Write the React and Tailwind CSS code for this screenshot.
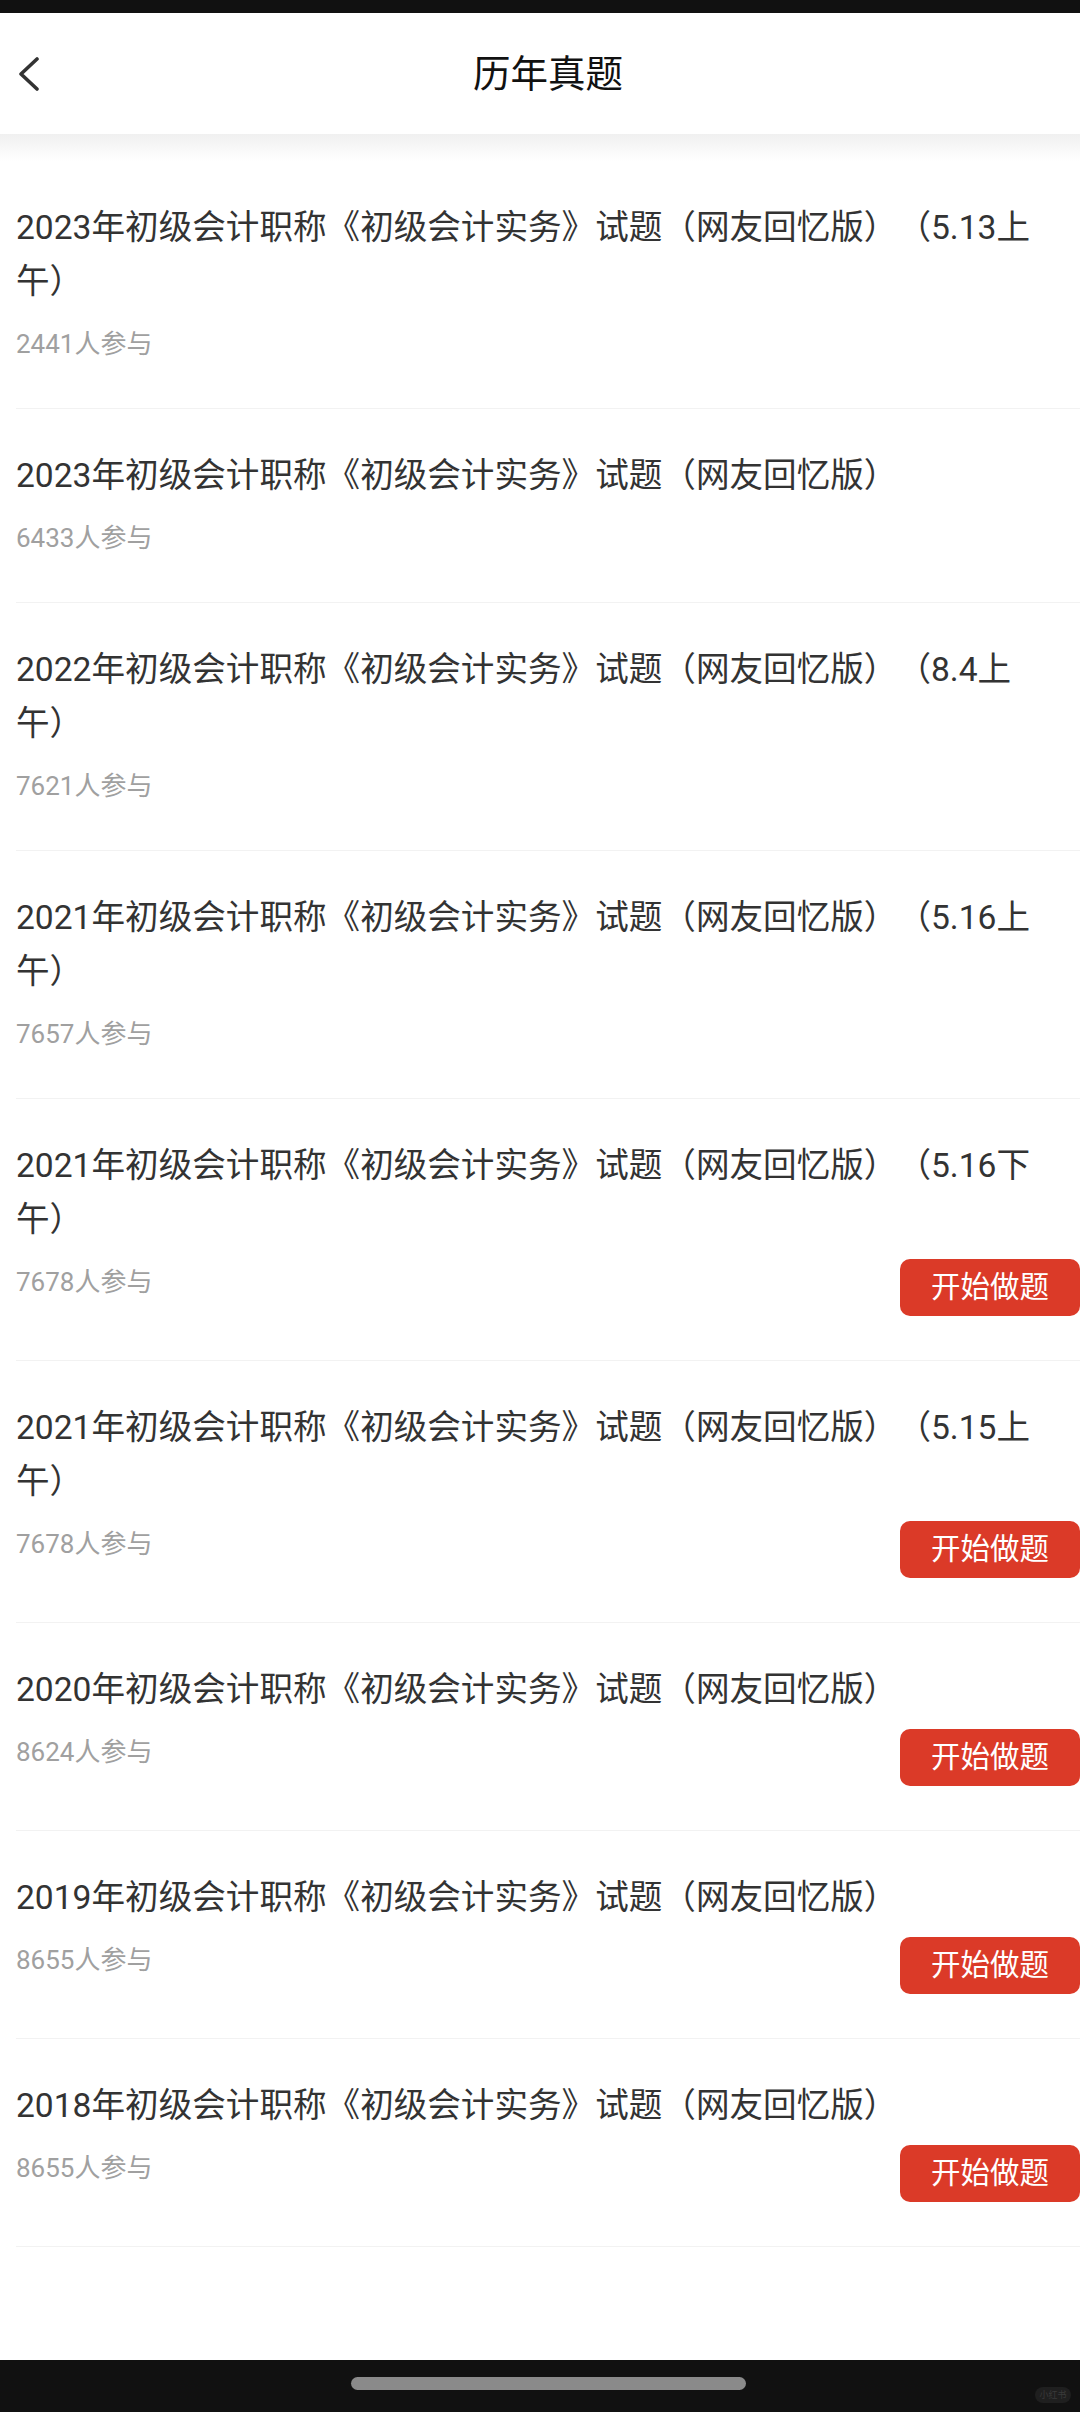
import React from "react";

const items = [
  { y: "2023", tail: "（5.13上午）", n: "2441", btn: false },
  { y: "2023", tail: "", n: "6433", btn: false },
  { y: "2022", tail: "（8.4上午）", n: "7621", btn: false },
  { y: "2021", tail: "（5.16上午）", n: "7657", btn: false },
  { y: "2021", tail: "（5.16下午）", n: "7678", btn: true },
  { y: "2021", tail: "（5.15上午）", n: "7678", btn: true },
  { y: "2020", tail: "", n: "8624", btn: true },
  { y: "2019", tail: "", n: "8655", btn: true },
  { y: "2018", tail: "", n: "8655", btn: true },
];

const font = { fontFamily: 'Roboto, "Noto Sans CJK SC", sans-serif' };

function Item({ it }) {
  return (
    <div className="ml-[16px] border-b border-[#f2f2f2] pt-[40px] pb-[44px]">
      <div className="pr-[43px] text-[33.6px] leading-[54px] text-[#333333] [text-spacing-trim:space-all]">
        {it.y}年初级会计职称《初级会计实务》试题（网友回忆版）{it.tail}
      </div>
      <div className="mt-[12px] flex items-start justify-between">
        <div className="mt-[3px] text-[26px] leading-[40px] text-[#a0a0a0]">
          {it.n}人参与
        </div>
        {it.btn && (
          <div className="flex h-[57px] w-[180px] items-center justify-center rounded-[10px] bg-[#db3a28] text-[29.5px] text-white">
            开始做题
          </div>
        )}
      </div>
    </div>
  );
}

export default function App() {
  return (
    <div className="flex min-h-[2412px] w-[1080px] flex-col bg-white" style={font}>
      <div className="h-[13px] bg-[#111111]" />
      <div className="grid h-[121px] grid-cols-[96px_1fr_80px] items-center bg-white">
        <div className="flex items-center pl-[18px]">
          <svg width="22" height="34" viewBox="0 0 22 34" fill="none">
            <polyline
              points="19,2 3,17 19,32"
              stroke="#333333"
              strokeWidth="3.6"
              strokeLinecap="round"
              strokeLinejoin="round"
            />
          </svg>
        </div>
        <div className="text-center text-[37.5px] leading-[48px] text-[#111111]">历年真题</div>
        <div />
      </div>
      <div className="h-[27px] bg-gradient-to-b from-[#f0f0f0] to-white" />
      <div className="flex flex-col">
        {items.map((it, i) => (
          <Item key={i} it={it} />
        ))}
      </div>
      <div className="flex-1" />
      <div className="relative flex h-[52px] justify-center bg-[#111111] pl-[16px] pt-[17px]">
        <div className="h-[13px] w-[395px] rounded-full bg-[#8a8a8a]" />
        <div className="absolute right-[9px] top-[27px] flex h-[16px] w-[36px] items-center justify-center rounded-full bg-[#1f1f1f] text-[9px] leading-none text-[#3a3a3a]">
          小红书
        </div>
      </div>
    </div>
  );
}
